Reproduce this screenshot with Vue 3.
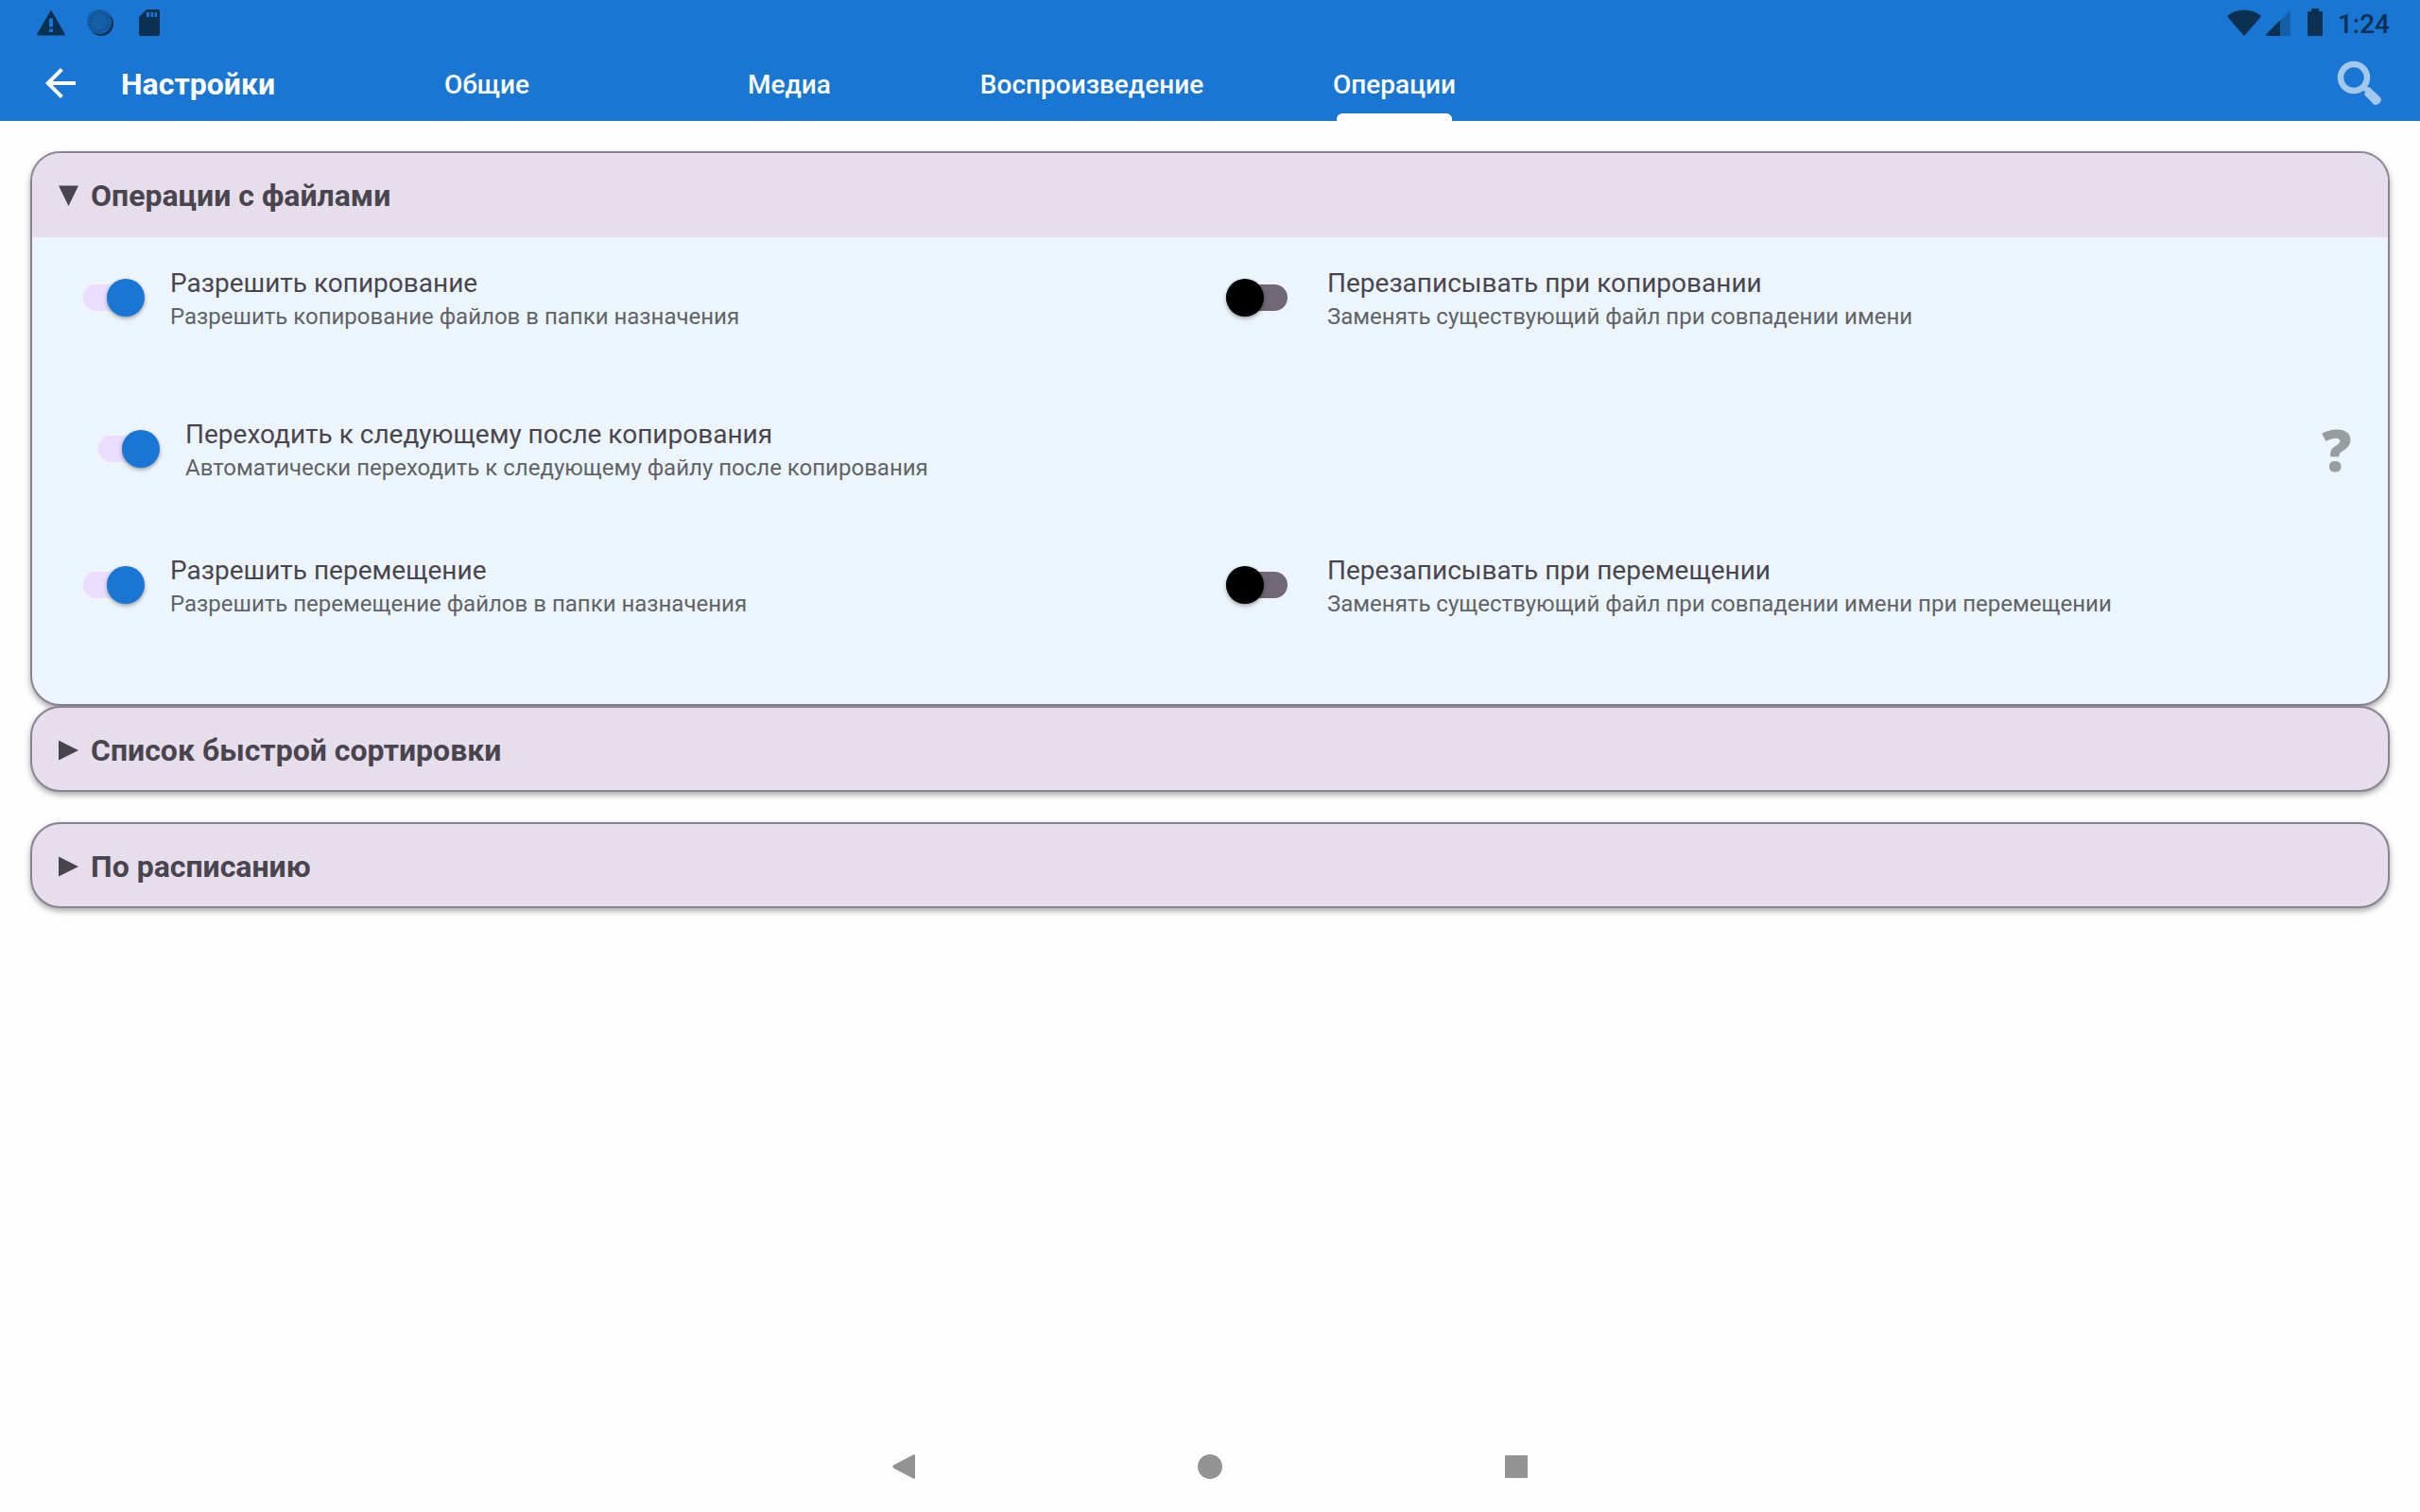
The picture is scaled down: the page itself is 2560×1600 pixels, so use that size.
<script setup>
import { reactive, ref } from 'vue'

const tabs = ['Общие', 'Медиа', 'Воспроизведение', 'Операции']
const activeTab = ref(3)

const rows = reactive([
  [
    { id: 'copy', on: true, title: 'Разрешить копирование', hint: 'Разрешить копирование файлов в папки назначения' },
    { id: 'copy-over', on: false, title: 'Перезаписывать при копировании', hint: 'Заменять существующий файл при совпадении имени' },
  ],
  [
    { id: 'next', on: true, title: 'Переходить к следующему после копирования', hint: 'Автоматически переходить к следующему файлу после копирования' },
  ],
  [
    { id: 'move', on: true, title: 'Разрешить перемещение', hint: 'Разрешить перемещение файлов в папки назначения' },
    { id: 'move-over', on: false, title: 'Перезаписывать при перемещении', hint: 'Заменять существующий файл при совпадении имени при перемещении' },
  ],
])

const ticks = Array.from({ length: 20 }, (_, i) => i * 18)
</script>

<template>
  <div class="screen">
    <header class="top">
      <div class="status">
        <div class="status-group">
          <svg viewBox="0 0 30 28" width="30" height="28">
            <path fill-rule="evenodd" d="M15 0.500 L29.800 26 Q30 27.500 28.500 27.500 H1.500 Q0 27.500 0.200 26 Z M13 9.500 V18.500 H17 V9.500 Z M13 20.500 V24 H17 V20.500 Z" fill="#0a3052" />
          </svg>
          <svg class="s-disc" viewBox="0 0 28 28" width="28" height="28">
            <circle cx="15" cy="15" r="13" fill="#0a3052" />
            <circle cx="13" cy="13" r="13" fill="#155fa8" />
            <g stroke="#0f4a85" stroke-width="1">
              <line v-for="t in ticks" :key="t" x1="13" y1="1" x2="13" y2="5" :transform="`rotate(${t} 13 13)`" />
            </g>
          </svg>
          <svg class="s-card" viewBox="0 0 22 28" width="22" height="28">
            <path fill-rule="evenodd" d="M8 0 H20 Q22 0 22 2 V26 Q22 28 20 28 H2 Q0 28 0 26 V8 Z M8 3 V8 H11 V3 Z M12.500 3 V8 H15 V3 Z M16.500 3 V8 H19 V3 Z" fill="#0a3052" />
          </svg>
        </div>
        <div class="status-group">
          <svg viewBox="0 0 36 28" width="36" height="28">
            <path d="M0.500 6.500 Q8 0.500 18 0.500 Q28 0.500 35.500 6.500 Q35.500 8 35 8.500 L19 27 Q18 28 17 27 L1 8.500 Q0.500 8 0.500 6.500 Z" fill="#0a3052" />
          </svg>
          <svg class="s-cell" viewBox="0 0 26 28" width="26" height="28">
            <path d="M15 12 L24 3 Q26 1.500 26 3.500 V26 Q26 28 24 28 H15 Z" fill="#155fa8" />
            <path d="M15 11.500 V28 H1.500 Q-0.500 27.500 0.500 26 Z" fill="#0a3052" />
          </svg>
          <svg class="s-batt" viewBox="0 0 16 30" width="16" height="30">
            <path d="M4 0 H12 V3 H15 Q16 3 16 4 V28 Q16 29 15 29 H1 Q0 29 0 28 V4 Q0 3 1 3 H4 Z" fill="#0a3052" />
          </svg>
          <time class="clock">1:24</time>
        </div>
      </div>

      <div class="bar">
        <button class="icon-btn" type="button" aria-label="Назад">
          <svg viewBox="0 0 24 24" width="48" height="48">
            <path d="M20 11H7.830l5.590-5.590L12 4l-8 8 8 8 1.410-1.410L7.830 13H20z" fill="#fff" />
          </svg>
        </button>
        <h1>Настройки</h1>
        <nav class="tabs">
          <button
            v-for="(tab, i) in tabs"
            :key="tab"
            type="button"
            class="tab"
            :class="{ active: i === activeTab }"
            @click="activeTab = i"
          >{{ tab }}</button>
        </nav>
        <button class="icon-btn" type="button" aria-label="Поиск">
          <svg viewBox="0 0 48 48" width="48" height="48">
            <g transform="translate(0.500 0.500)">
              <circle cx="17.500" cy="17.500" r="14" fill="none" stroke="#a3c8ec" stroke-width="6.500" />
              <path d="M27 27 L31 31" stroke="#a3c8ec" stroke-width="5" />
              <path d="M30 33 Q28 31 29 29 Q31 26.500 34 28 Q35 28 36 29.500 L45 38 Q48 41 45 44 Q42 48 38 45.500 L29 36 Q28 34 30 33 Z" fill="#a3c8ec" />
            </g>
          </svg>
        </button>
      </div>
    </header>

    <main>
      <section class="card open">
        <h2>
          <button type="button" class="card-head" aria-expanded="true">
            <svg viewBox="0 0 22 22" width="22" height="22"><path d="M0 0.500 H21 L10.500 22 Z" fill="#49454f" /></svg>
            Операции с файлами
          </button>
        </h2>
        <div class="card-body">
          <div v-for="(row, r) in rows" :key="r" class="row" :class="{ single: row.length === 1 }">
            <div v-for="item in row" :key="item.id" class="option">
              <input :id="item.id" v-model="item.on" class="switch" type="checkbox" role="switch" />
              <label :for="item.id">
                <span class="title">{{ item.title }}</span>
                <span class="hint">{{ item.hint }}</span>
              </label>
            </div>
            <button v-if="row.length === 1" type="button" class="help" aria-label="Справка">?</button>
          </div>
        </div>
      </section>

      <section class="card">
        <h2>
          <button type="button" class="card-head" aria-expanded="false">
            <svg viewBox="0 0 22 22" width="22" height="22"><path d="M0 0.500 L21 11 L0 21.500 Z" fill="#49454f" /></svg>
            Список быстрой сортировки
          </button>
        </h2>
      </section>

      <section class="card spaced">
        <h2>
          <button type="button" class="card-head" aria-expanded="false">
            <svg viewBox="0 0 22 22" width="22" height="22"><path d="M0 0.500 L21 11 L0 21.500 Z" fill="#49454f" /></svg>
            По расписанию
          </button>
        </h2>
      </section>
    </main>

    <footer class="sysnav">
      <button type="button" aria-label="Назад">
        <svg viewBox="0 0 26 26" width="26" height="26"><path d="M23.500 0.200 Q25 -0.200 25 1.500 V24.500 Q25 26.200 23.500 25.800 L2 14.500 Q0.500 13 2 11.500 Z" fill="#939393" /></svg>
      </button>
      <button type="button" aria-label="Домой">
        <svg viewBox="0 0 26 26" width="26" height="26"><circle cx="13" cy="13" r="13" fill="#939393" /></svg>
      </button>
      <button type="button" aria-label="Обзор">
        <svg viewBox="0 0 26 26" width="26" height="26"><rect x="1" y="1" width="24" height="24" rx="1" fill="#939393" /></svg>
      </button>
    </footer>
  </div>
</template>

<style>
body {
  margin: 0;
  background: #fefefe;
}
</style>

<style scoped>
.screen {
  min-height: 100vh;
  display: flex;
  flex-direction: column;
  font-family: Roboto, "Noto Sans", sans-serif;
  color: #49454f;
}
button {
  border: 0;
  padding: 0;
  margin: 0;
  background: none;
  font: inherit;
  color: inherit;
  cursor: pointer;
}
svg {
  display: block;
  flex: none;
}
.top {
  background: #1976d2;
}
.status {
  height: 48px;
  padding: 0 32px 0 39px;
  display: flex;
  align-items: center;
  justify-content: space-between;
}
.status-group {
  display: flex;
  align-items: center;
}
.s-disc {
  margin-left: 23px;
}
.s-card {
  margin-left: 27px;
}
.s-cell {
  margin-left: 5px;
}
.s-batt {
  margin-left: 18px;
}
.clock {
  margin-left: 16px;
  padding-top: 3px;
  font-size: 28px;
  line-height: 45px;
  font-weight: 500;
  color: #0a3052;
}
.bar {
  height: 80px;
  padding: 0 40px;
  display: flex;
  align-items: center;
}
.icon-btn {
  width: 48px;
  height: 48px;
  flex: none;
}
h1 {
  margin: 0 0 0 40px;
  padding-top: 3px;
  width: 227px;
  flex: none;
  font-size: 32px;
  line-height: 77px;
  font-weight: 700;
  color: #fff;
}
.tabs {
  display: flex;
  margin-right: auto;
}
.tab {
  width: 320px;
  height: 80px;
  padding-top: 3px;
  display: flex;
  flex-direction: column;
  align-items: center;
  font-size: 28px;
  line-height: 77px;
  font-weight: 500;
  color: #fff;
}
.tab.active::after {
  content: "";
  width: 122px;
  height: 8px;
  margin-top: -8px;
  flex: none;
  border-radius: 6px 6px 0 0;
  background: #fff;
}
main {
  flex: 1;
  padding: 32px;
}
.card {
  border: 2px solid #8b8392;
  border-radius: 32px;
  background: #e6deea;
  box-shadow: 0 3px 6px rgba(0, 0, 0, 0.35);
}
.card.open {
  background: #edf5fc;
  overflow: hidden;
}
.card.spaced {
  margin-top: 32px;
}
h2 {
  margin: 0;
  font-size: 32px;
  line-height: 84px;
  font-weight: 700;
}
.card-head {
  width: 100%;
  padding: 3px 28px 0;
  display: flex;
  align-items: center;
  gap: 12px;
  text-align: left;
  color: #49454f;
}
.open .card-head {
  background: #e6deea;
  padding-bottom: 2px;
}
.card-body {
  padding: 29px 20px 91px 54px;
}
.row {
  display: flex;
  height: 70px;
}
.row + .row {
  margin-top: 74px;
}
.row.single {
  margin-top: 90px;
  padding: 0 18px 0 16px;
  align-items: center;
  justify-content: space-between;
}
.option {
  display: flex;
  align-items: center;
  gap: 27px;
}
.row:not(.single) .option {
  flex: 1;
}
.option + .option {
  gap: 42px;
}
.option label {
  padding-top: 2px;
  display: flex;
  flex-direction: column;
}
.title {
  font-size: 28px;
  line-height: 38px;
}
.hint {
  font-size: 24px;
  line-height: 32px;
  color: #5f6368;
}
.switch {
  appearance: none;
  position: relative;
  width: 65px;
  height: 40px;
  margin: 0;
  flex: none;
  display: flex;
  align-items: center;
  cursor: pointer;
}
.switch::before {
  content: "";
  width: 65px;
  height: 28px;
  border-radius: 14px;
  background: #706876;
}
.switch::after {
  content: "";
  position: absolute;
  left: 0;
  width: 40px;
  height: 40px;
  border-radius: 50%;
  background: #000;
  box-shadow: 0 2px 4px rgba(0, 0, 0, 0.35);
}
.switch:checked::before {
  background: #eaddff;
}
.switch:checked::after {
  left: auto;
  right: 0;
  background: #1976d2;
}
.help {
  width: 32px;
  font-family: "Open Sans", "Noto Sans", sans-serif;
  font-size: 62px;
  line-height: 70px;
  font-weight: 800;
  color: #989d9f;
}
.sysnav {
  height: 96px;
  display: flex;
  align-items: center;
  justify-content: center;
  gap: 298px;
}
</style>
